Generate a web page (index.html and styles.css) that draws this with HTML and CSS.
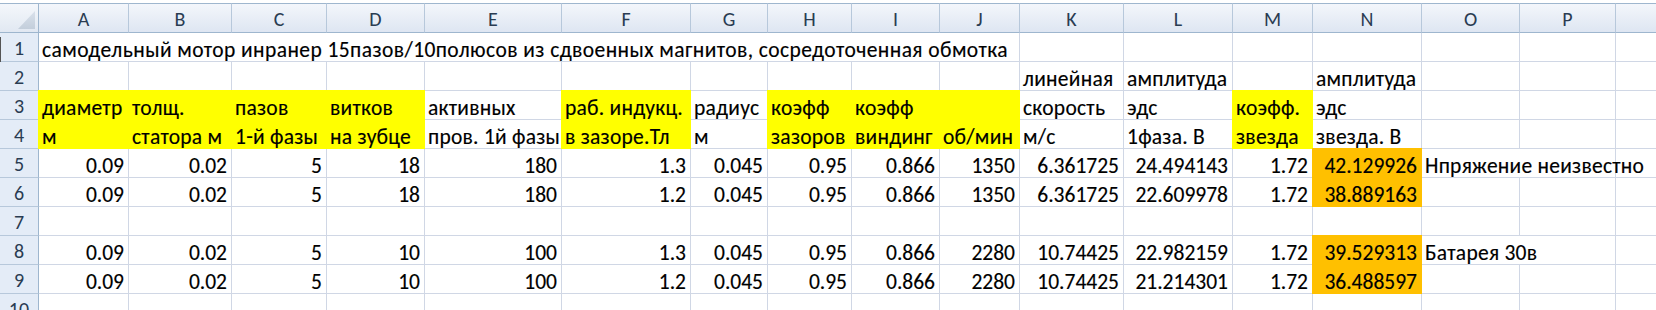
FILE: index.html
```html
<!DOCTYPE html>
<html lang="ru">
<head>
<meta charset="utf-8">
<title>Лист1</title>
<link rel="stylesheet" href="styles.css">
</head>
<body>
<div class="sheet">
  <div class="corner"><span class="tri"></span></div>
  <div class="ch">A</div><div class="ch">B</div><div class="ch">C</div><div class="ch">D</div><div class="ch">E</div><div class="ch">F</div><div class="ch">G</div><div class="ch">H</div><div class="ch">I</div><div class="ch">J</div><div class="ch">K</div><div class="ch">L</div><div class="ch">M</div><div class="ch">N</div><div class="ch">O</div><div class="ch">P</div><div class="ch"></div>

  <div class="rh">1</div>
  <div class="c t title span10">самодельный мотор инранер 15пазов/10полюсов из сдвоенных магнитов, сосредоточенная обмотка</div>
  <div class="c"></div><div class="c"></div><div class="c"></div><div class="c"></div><div class="c"></div><div class="c"></div><div class="c"></div>

  <div class="rh">2</div>
  <div class="c"></div><div class="c"></div><div class="c"></div><div class="c"></div><div class="c"></div><div class="c"></div><div class="c"></div><div class="c"></div><div class="c"></div><div class="c"></div>
  <div class="c t">линейная</div><div class="c t">амплитуда</div><div class="c"></div><div class="c t">амплитуда</div><div class="c"></div><div class="c"></div><div class="c"></div>

  <div class="rh">3</div>
  <div class="c t y">диаметр</div><div class="c t y">толщ.</div><div class="c t y">пазов</div><div class="c t y">витков</div><div class="c t">активных</div><div class="c t y">раб. индукц.</div><div class="c t">радиус</div><div class="c t y">коэфф</div><div class="c t y">коэфф</div><div class="c y"></div>
  <div class="c t">скорость</div><div class="c t">эдс</div><div class="c t y">коэфф.</div><div class="c t">эдс</div><div class="c"></div><div class="c"></div><div class="c"></div>

  <div class="rh">4</div>
  <div class="c t y">м</div><div class="c t y">статора м</div><div class="c t y">1-й фазы</div><div class="c t y">на зубце</div><div class="c t">пров. 1й фазы</div><div class="c t y">в зазоре.Тл</div><div class="c t">м</div><div class="c t y">зазоров</div><div class="c t y">виндинг</div><div class="c t y">об/мин</div>
  <div class="c t">м/с</div><div class="c t">1фаза. В</div><div class="c t y">звезда</div><div class="c t">звезда. В</div><div class="c"></div><div class="c"></div><div class="c"></div>

  <div class="rh">5</div>
  <div class="c n">0.09</div><div class="c n">0.02</div><div class="c n">5</div><div class="c n">18</div><div class="c n">180</div><div class="c n">1.3</div><div class="c n">0.045</div><div class="c n">0.95</div><div class="c n">0.866</div><div class="c n">1350</div>
  <div class="c n">6.361725</div><div class="c n">24.494143</div><div class="c n">1.72</div><div class="c n o">42.129926</div><div class="c t span2">Нпряжение неизвестно</div><div class="c"></div>

  <div class="rh">6</div>
  <div class="c n">0.09</div><div class="c n">0.02</div><div class="c n">5</div><div class="c n">18</div><div class="c n">180</div><div class="c n">1.2</div><div class="c n">0.045</div><div class="c n">0.95</div><div class="c n">0.866</div><div class="c n">1350</div>
  <div class="c n">6.361725</div><div class="c n">22.609978</div><div class="c n">1.72</div><div class="c n o">38.889163</div><div class="c"></div><div class="c"></div><div class="c"></div>

  <div class="rh">7</div>
  <div class="c"></div><div class="c"></div><div class="c"></div><div class="c"></div><div class="c"></div><div class="c"></div><div class="c"></div><div class="c"></div><div class="c"></div><div class="c"></div><div class="c"></div><div class="c"></div><div class="c"></div><div class="c"></div><div class="c"></div><div class="c"></div><div class="c"></div>

  <div class="rh">8</div>
  <div class="c n">0.09</div><div class="c n">0.02</div><div class="c n">5</div><div class="c n">10</div><div class="c n">100</div><div class="c n">1.3</div><div class="c n">0.045</div><div class="c n">0.95</div><div class="c n">0.866</div><div class="c n">2280</div>
  <div class="c n">10.74425</div><div class="c n">22.982159</div><div class="c n">1.72</div><div class="c n o">39.529313</div><div class="c t span2">Батарея 30в</div><div class="c"></div>

  <div class="rh">9</div>
  <div class="c n">0.09</div><div class="c n">0.02</div><div class="c n">5</div><div class="c n">10</div><div class="c n">100</div><div class="c n">1.2</div><div class="c n">0.045</div><div class="c n">0.95</div><div class="c n">0.866</div><div class="c n">2280</div>
  <div class="c n">10.74425</div><div class="c n">21.214301</div><div class="c n">1.72</div><div class="c n o">36.488597</div><div class="c"></div><div class="c"></div><div class="c"></div>

  <div class="rh">10</div>
  <div class="c"></div><div class="c"></div><div class="c"></div><div class="c"></div><div class="c"></div><div class="c"></div><div class="c"></div><div class="c"></div><div class="c"></div><div class="c"></div><div class="c"></div><div class="c"></div><div class="c"></div><div class="c"></div><div class="c"></div><div class="c"></div><div class="c"></div>
</div>
<div class="cursor"></div>
</body>
</html>
```
FILE: styles.css
```css
html, body {
  margin: 0;
  padding: 0;
  background: #ffffff;
  height: 310px;
  overflow: hidden;
}
body {
  position: relative;
  font-family: "Carlito", "Calibri", "Liberation Sans", sans-serif;
  color: #000000;
}
.sheet {
  display: grid;
  grid-template-columns: 39px 90px 103px 95px 98px 137px 129px 77px 84px 88px 80px 104px 109px 80px 109px 98px 96px 96px;
  grid-template-rows: 30px repeat(10, 29px);
  padding-top: 3px;
  width: max-content;
}
.corner {
  position: relative;
  box-sizing: border-box;
  border-top: 1px solid #9eb6ce;
  border-right: 1px solid #9eb6ce;
  border-bottom: 1px solid #9eb6ce;
  background: linear-gradient(#f4f7fb, #e1e8f2);
}
.tri {
  position: absolute;
  right: 3px;
  bottom: 3px;
  width: 17px;
  height: 18px;
  background: linear-gradient(#d9e1eb, #c3cedb);
  clip-path: polygon(100% 0, 100% 100%, 0 100%);
}
.ch {
  box-sizing: border-box;
  border-top: 1px solid #9eb6ce;
  border-right: 1px solid #b7c8db;
  border-bottom: 1px solid #9eb6ce;
  background: linear-gradient(#f3f6fb, #dee6f2);
  color: #2a3c52;
  font-size: 20px;
  display: flex;
  align-items: center;
  justify-content: center;
  line-height: 1;
  padding-top: 1px;
}
.rh {
  box-sizing: border-box;
  border-right: 1px solid #9eb6ce;
  border-bottom: 1px solid #b7c8db;
  background: #e4ecf7;
  color: #2a3c52;
  font-size: 20px;
  display: flex;
  align-items: center;
  justify-content: center;
  line-height: 1;
  padding-top: 1px;
}
.c {
  box-sizing: border-box;
  border-right: 1px solid #d0d7e5;
  border-bottom: 1px solid #d0d7e5;
  font-size: 21.5px;
  line-height: 1;
  display: flex;
  align-items: flex-end;
  padding: 0 3px 0 3px;
  white-space: nowrap;
  min-width: 0;
  -webkit-text-stroke: 0.15px #000000;
}
.t {
  justify-content: flex-start;
  letter-spacing: 0.25px;
}
.title {
  letter-spacing: 0.42px;
}
.n {
  justify-content: flex-end;
  padding-right: 4px;
}
.span10 {
  grid-column: span 10;
}
.span2 {
  grid-column: span 2;
}
.y {
  background: #ffff00;
  border-color: #ffff00;
  box-shadow: -1px 0 0 0 #ffff00, 0 -1px 0 0 #ffff00, -1px -1px 0 0 #ffff00;
}
.o {
  background: #ffc000;
  border-color: #ffc000;
  box-shadow: -1px 0 0 0 #ffc000, 0 -1px 0 0 #ffc000, -1px -1px 0 0 #ffc000;
}
.cursor {
  position: absolute;
  left: 0;
  top: 37px;
  width: 1px;
  height: 25px;
  background: #555555;
}
```
